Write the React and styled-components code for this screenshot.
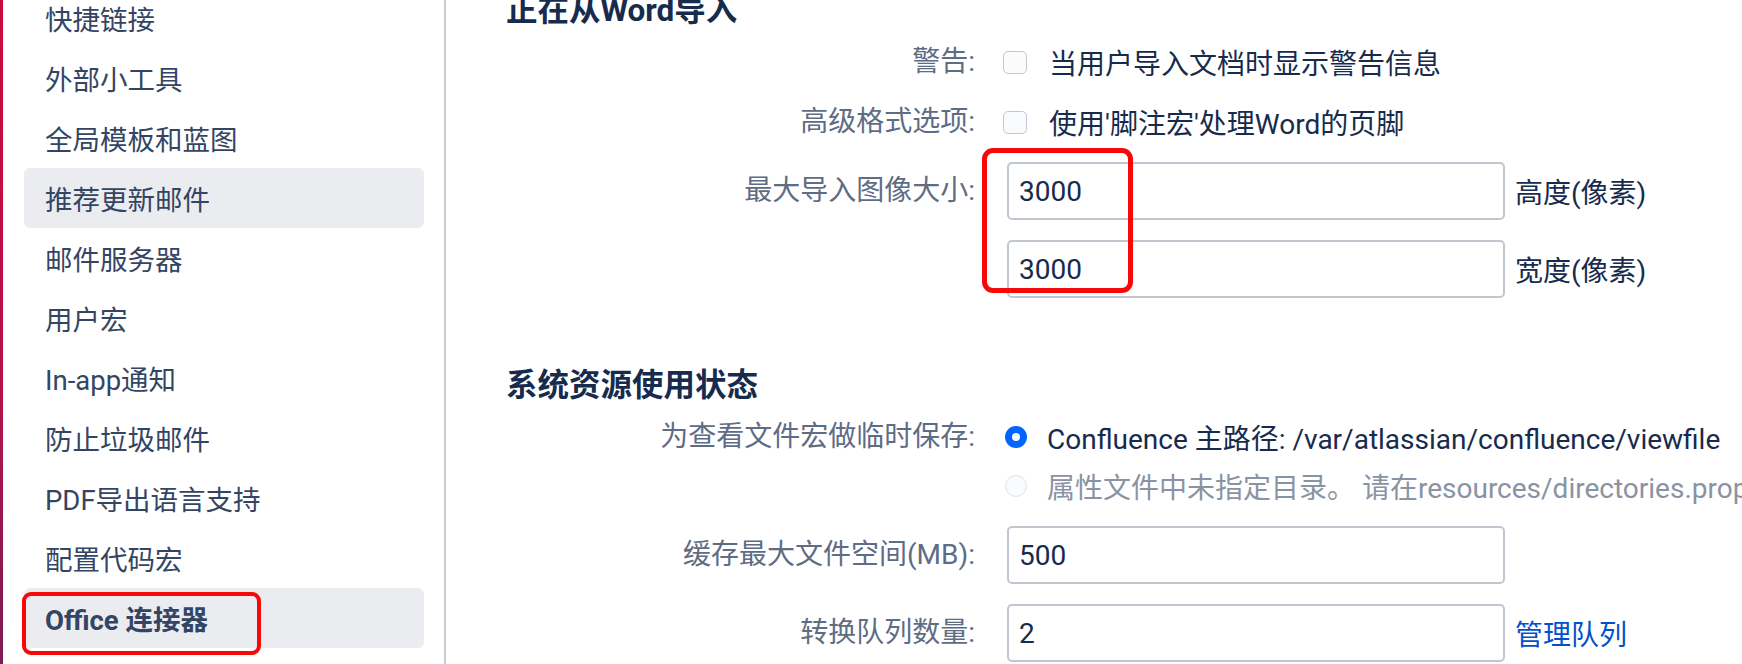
import React from 'react';
import styled, { createGlobalStyle } from 'styled-components';

const FONT = `Roboto, "Noto Sans CJK SC", sans-serif`;

const GlobalStyle = createGlobalStyle`
  html, body {
    margin: 0;
    padding: 0;
    background: #fff;
    overflow: hidden;
  }
  body {
    font-family: ${FONT};
    color: #172b4d;
  }
`;

const navItems = [
  { label: '快捷链接' },
  { label: '外部小工具' },
  { label: '全局模板和蓝图' },
  { label: '推荐更新邮件', hover: true },
  { label: '邮件服务器' },
  { label: '用户宏' },
  { label: 'In-app通知' },
  { label: '防止垃圾邮件' },
  { label: 'PDF导出语言支持' },
  { label: '配置代码宏' },
  { label: 'Office 连接器', active: true },
];

const App = () => {
  return (
    <Page>
      <GlobalStyle />
      <Edge />
      <Sidebar>
        <NavList>
          {navItems.map((item) => (
            <NavItem key={item.label} $hover={item.hover} $active={item.active}>
              {item.label}
            </NavItem>
          ))}
        </NavList>
      </Sidebar>

      <Main>
        <Section>
          <Heading>正在从Word导入</Heading>
          <Fields>
            <Field>
              <Label $h={40}>警告:</Label>
              <Controls>
                <Option>
                  <Checkbox />
                  当用户导入文档时显示警告信息
                </Option>
              </Controls>
            </Field>
            <Field>
              <Label $h={40}>高级格式选项:</Label>
              <Controls>
                <Option>
                  <Checkbox />
                  使用'脚注宏'处理Word的页脚
                </Option>
              </Controls>
            </Field>
            <Field>
              <Label $h={58}>最大导入图像大小:</Label>
              <Controls $gap={20}>
                <InputRow>
                  <TextInput defaultValue="3000" />
                  <Suffix>高度(像素)</Suffix>
                </InputRow>
                <InputRow>
                  <TextInput defaultValue="3000" />
                  <Suffix>宽度(像素)</Suffix>
                </InputRow>
              </Controls>
            </Field>
          </Fields>
        </Section>

        <Section $top={77}>
          <Heading>系统资源使用状态</Heading>
          <Fields>
            <Field>
              <Label $h={40}>为查看文件宏做临时保存:</Label>
              <Controls $gap={9}>
                <Option $gap={20}>
                  <Radio $checked />
                  Confluence 主路径: /var/atlassian/confluence/viewfile
                </Option>
                <Option $gap={20} $disabled>
                  <Radio />
                  属性文件中未指定目录。 请在resources/directories.properties中设置confluence.viewfile.dir
                </Option>
              </Controls>
            </Field>
            <Field>
              <Label $h={58}>缓存最大文件空间(MB):</Label>
              <Controls>
                <InputRow>
                  <TextInput defaultValue="500" />
                </InputRow>
              </Controls>
            </Field>
            <Field>
              <Label $h={58}>转换队列数量:</Label>
              <Controls>
                <InputRow>
                  <TextInput defaultValue="2" />
                  <Link href="#">管理队列</Link>
                </InputRow>
              </Controls>
            </Field>
          </Fields>
        </Section>
      </Main>

      <Mark $x={22} $y={592} $w={239} $h={63} $stroke={4} $r={9} />
      <Mark $x={982} $y={148} $w={151} $h={145} $stroke={5} $r={11} />
    </Page>
  );
};

const Page = styled.div`
  position: relative;
  display: flex;
  width: 1742px;
  height: 664px;
  overflow: hidden;
  background: #fff;
`;

const Edge = styled.div`
  flex: none;
  width: 3px;
  background: linear-gradient(180deg, #cc0b3d 0%, #b8124a 55%, #7d1b55 100%);
`;

const Sidebar = styled.nav`
  flex: none;
  width: 441px;
  border-right: 2px solid #c9cdd3;
  background: #fff;
`;

const NavList = styled.ul`
  list-style: none;
  margin: -12px 0 0;
  padding: 0 0 0 21px;
`;

const NavItem = styled.li`
  width: 400px;
  height: 60px;
  box-sizing: border-box;
  padding-left: 21px;
  display: flex;
  align-items: center;
  border-radius: 6px;
  font-size: 27.5px;
  font-weight: ${(p) => (p.$active ? 700 : 400)};
  color: #344563;
  background: ${(p) => (p.$hover || p.$active ? '#ebecf0' : 'transparent')};
  white-space: nowrap;
`;

const Main = styled.main`
  flex: 1;
  min-width: 0;
  padding-left: 60px;
  overflow: hidden;
`;

const Section = styled.section`
  margin-top: ${(p) => p.$top || 0}px;
`;

const Heading = styled.h2`
  margin: -9px 0 11px;
  height: 40px;
  line-height: 40px;
  font-size: 31.5px;
  font-weight: 700;
  color: #172b4d;
  white-space: nowrap;
`;

const Fields = styled.div`
  display: flex;
  flex-direction: column;
  gap: 20px;
`;

const Field = styled.div`
  display: grid;
  grid-template-columns: 469px 1fr;
  column-gap: 28px;
  align-items: start;
`;

const Label = styled.div`
  text-align: right;
  font-size: 28px;
  line-height: ${(p) => p.$h}px;
  color: #5e6c84;
  white-space: nowrap;
`;

const Controls = styled.div`
  display: flex;
  flex-direction: column;
  gap: ${(p) => p.$gap || 0}px;
  min-width: 0;
`;

const Option = styled.label`
  display: flex;
  align-items: center;
  gap: ${(p) => p.$gap || 22}px;
  height: 40px;
  font-size: 28px;
  color: ${(p) => (p.$disabled ? '#8993a4' : '#172b4d')};
  white-space: nowrap;
`;

const Checkbox = styled.span`
  flex: none;
  width: 24px;
  height: 23px;
  box-sizing: border-box;
  border: 1.5px solid #c1c7d0;
  border-radius: 5px;
  background: #fafbfc;
`;

const Radio = styled.span`
  flex: none;
  width: 22px;
  height: 22px;
  margin-left: 2px;
  box-sizing: border-box;
  border-radius: 50%;
  border: ${(p) => (p.$checked ? '7px solid #0065ff' : '1.5px solid #dfe1e6')};
  background: #fafbfc;
`;

const InputRow = styled.div`
  display: flex;
  align-items: center;
  gap: 10px;
  height: 58px;
`;

const TextInput = styled.input.attrs({ type: 'text', readOnly: true })`
  flex: none;
  width: 498px;
  height: 58px;
  margin-left: 4px;
  box-sizing: border-box;
  padding: 0 10px;
  border: 2px solid #c1c7d0;
  border-radius: 5px;
  background: #fff;
  font-family: ${FONT};
  font-size: 28px;
  color: #172b4d;
  outline: none;
`;

const Suffix = styled.span`
  font-size: 28px;
  color: #172b4d;
  white-space: nowrap;
`;

const Link = styled.a`
  font-size: 28px;
  color: #0052cc;
  text-decoration: none;
  white-space: nowrap;
`;

const Mark = styled.div`
  position: absolute;
  left: ${(p) => p.$x}px;
  top: ${(p) => p.$y}px;
  width: ${(p) => p.$w}px;
  height: ${(p) => p.$h}px;
  box-sizing: border-box;
  border: ${(p) => p.$stroke}px solid #f50a0a;
  border-radius: ${(p) => p.$r}px;
  pointer-events: none;
`;

export default App;
